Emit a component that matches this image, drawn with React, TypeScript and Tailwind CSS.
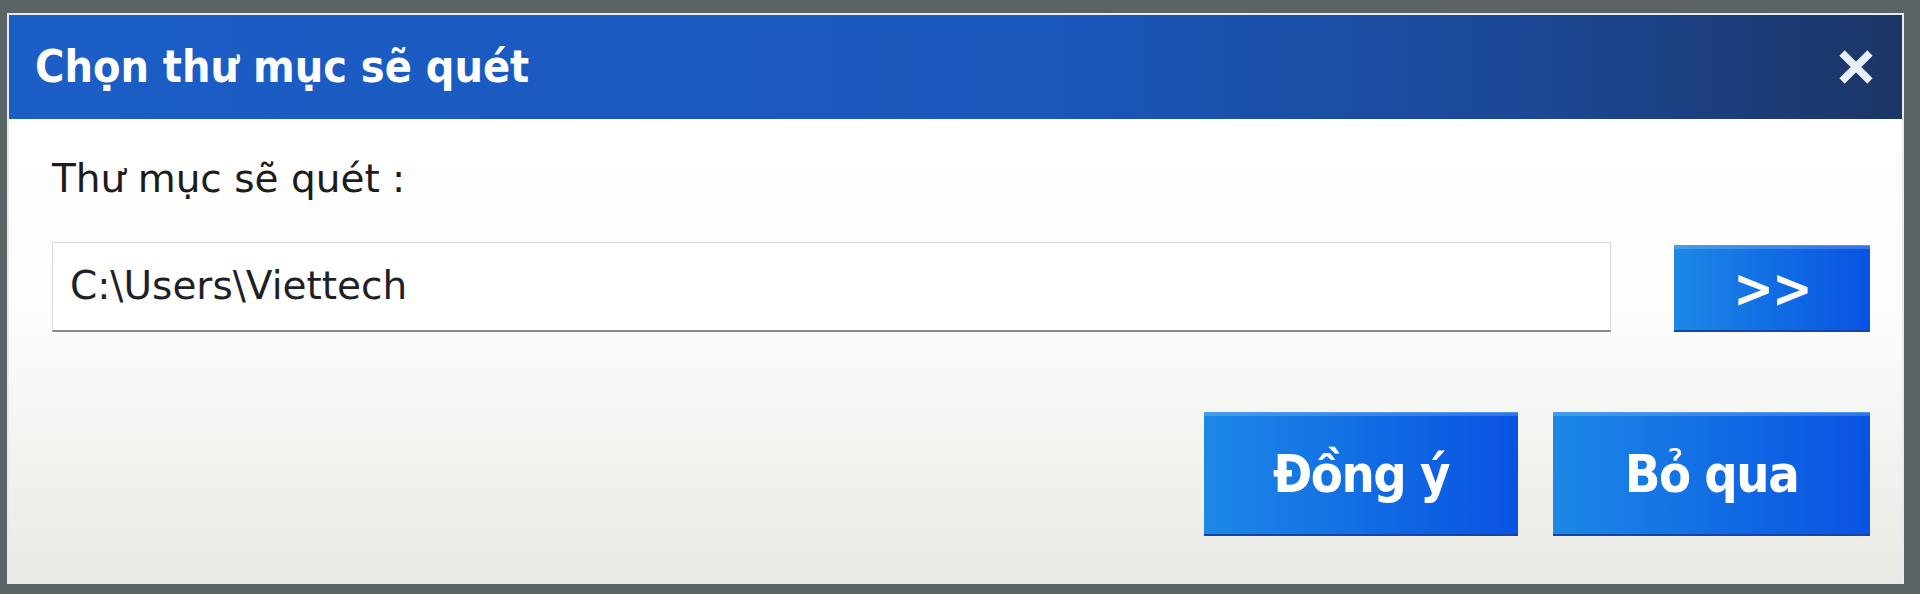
import React from "react";

const uiFont = {
  fontFamily: '"DejaVu Sans", sans-serif',
};

function CloseIcon() {
  return (
    <svg width="40" height="38" viewBox="0 0 40 38" aria-hidden="true">
      <path
        d="M6 5 L34 33 M34 5 L6 33"
        stroke="#e8eefa"
        strokeWidth="7.5"
        strokeLinecap="butt"
      />
    </svg>
  );
}

function BlueButton({
  label,
  className,
}: {
  label: string;
  className: string;
}) {
  return (
    <button
      className={`flex items-center justify-center border-t border-t-[#4d9af0] border-b-2 border-b-[#1546a6] bg-[linear-gradient(to_right,#1d88e6,#1270e4_45%,#0a52e2)] font-['DejaVu_Sans_Condensed','DejaVu_Sans',sans-serif] font-bold text-white shadow-[inset_0_3px_0_rgba(255,255,255,0.18)] ${className}`}
    >
      {label}
    </button>
  );
}

export default function App() {
  return (
    <div
      className="flex h-[594px] w-[1920px] bg-[#5a6466] pt-[13px] pr-[16px] pb-[10px] pl-[7px]"
      style={uiFont}
    >
      <div className="flex flex-1 flex-col border-2 border-[#e6ebeb] bg-white">
        <div className="flex h-[104px] items-center justify-between bg-[linear-gradient(to_right,#1b5ec6,#1a57bb_55%,#1b4896_80%,#1c3566)] pl-[26px] pr-[26px]">
          <span className="font-['DejaVu_Sans_Condensed','DejaVu_Sans',sans-serif] text-[44.5px] font-bold leading-none text-white">
            Chọn thư mục sẽ quét
          </span>
          <CloseIcon />
        </div>

        <div className="flex flex-1 flex-col bg-[linear-gradient(to_bottom,#ffffff,#fdfdfc_40%,#e9e9e4)] pt-[36px] pl-[43px] pr-[32px]">
          <div className="text-[39px] leading-[48px] text-[#1c1c1c]">
            Thư mục sẽ quét :
          </div>

          <div className="mt-[39px] flex items-end justify-between">
            <div className="flex h-[90px] w-[1559px] items-center border border-[#d9d9d9] border-b-2 border-b-[#8a8a8a] bg-white pl-[17px] text-[39px] text-[#1f1f2a]">
              C:\Users\Viettech
            </div>
            <BlueButton
              label=">>"
              className="h-[87px] w-[196px] text-[54px] tracking-[-2px]"
            />
          </div>

          <div className="mt-[80px] flex justify-end gap-[35px]">
            <BlueButton
              label="Đồng ý"
              className="h-[124px] w-[314px] text-[52px] tracking-[-1.5px]"
            />
            <BlueButton
              label="Bỏ qua"
              className="h-[124px] w-[317px] text-[52px] tracking-[-1.5px]"
            />
          </div>
        </div>
      </div>
    </div>
  );
}
